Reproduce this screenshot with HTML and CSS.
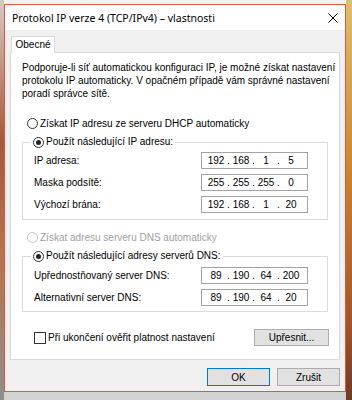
FILE: index.html
```html
<!DOCTYPE html>
<html><head><meta charset="UTF-8" /><link rel="stylesheet" href="styles.css"></head>
<body>
<div class="window">
	<div class="titlebar">
		<span>Protokol IP verze 4 (TCP/IPv4) – vlastnosti</span>
		<svg class="close" width="10" height="10" viewBox="0 0 10 10"><path d="M0.5 0.5L9.5 9.5M9.5 0.5L0.5 9.5" stroke="#000" stroke-width="1" fill="none"/></svg>
	</div>
	<div class="client">
		<div class="tabs"><div class="tab">Obecné</div></div>
		<div class="panel">
			<p class="intro">Podporuje-li síť automatickou konfiguraci IP, je možné získat nastavení<br>
			protokolu IP automaticky. V opačném případě vám správné nastavení<br>
			poradí správce sítě.</p>
			<div class="radio first"><span class="circle"></span>Získat IP adresu ze serveru DHCP automaticky</div>
			<fieldset class="group">
				<legend><span class="radio"><span class="circle on"></span>Použít následující IP adresu:</span></legend>
				<div class="row"><span>IP adresa:</span><span class="ip"><i>192</i><b>.</b><i>168</i><b>.</b><i>1</i><b>.</b><i>5</i></span></div>
				<div class="row"><span>Maska podsítě:</span><span class="ip"><i>255</i><b>.</b><i>255</i><b>.</b><i>255</i><b>.</b><i>0</i></span></div>
				<div class="row"><span>Výchozí brána:</span><span class="ip"><i>192</i><b>.</b><i>168</i><b>.</b><i>1</i><b>.</b><i>20</i></span></div>
			</fieldset>
			<div class="radio dns disabled"><span class="circle"></span>Získat adresu serveru DNS automaticky</div>
			<fieldset class="group second">
				<legend><span class="radio"><span class="circle on"></span>Použít následující adresy serverů DNS:</span></legend>
				<div class="row"><span>Upřednostňovaný server DNS:</span><span class="ip"><i>89</i><b>.</b><i>190</i><b>.</b><i>64</i><b>.</b><i>200</i></span></div>
				<div class="row"><span>Alternativní server DNS:</span><span class="ip"><i>89</i><b>.</b><i>190</i><b>.</b><i>64</i><b>.</b><i>20</i></span></div>
			</fieldset>
			<div class="validate">
				<span class="check"><span class="box"></span>Při ukončení ověřit platnost nastavení</span>
				<button class="btn advanced">Upřesnit...</button>
			</div>
		</div>
		<div class="actions">
			<button class="btn default">OK</button>
			<button class="btn">Zrušit</button>
		</div>
	</div>
</div>
</body></html>
```
FILE: styles.css
```css
* { box-sizing: border-box; }
body { margin: 0; width: 352px; height: 400px; overflow: hidden;
	padding: 4px 6px 8px 4px;
	background:
		linear-gradient(#d4cbc6, #a8583a 35%, #b7744e 65%, #8e8e8e) left top / 4px 100% no-repeat,
		linear-gradient(#dcc070, #c98030 45%, #a5552a 80%, #6e3a26) right top / 6px 100% no-repeat,
		linear-gradient(#f2f2f2, #f2f2f2 4px, #e3e3e3 4px, #e3e3e3 392px, #d2d2d2 392px);
	font: 10px "Liberation Sans", sans-serif; color: #000;
}
.window { height: 388px; border: 1px solid #e2573b; display: flex; flex-direction: column; background: #f0f0f0 }
.titlebar { height: 25px; flex: none; background: #fff; display: flex; align-items: center;
	justify-content: space-between; padding: 0 7px; font: 10.5px "Noto Sans", sans-serif }
.client { flex: 1; padding: 6px 5px 0 5px }
.tabs { display: flex; height: 16px; padding-left: 1px; position: relative; z-index: 1 }
.tab { width: 44px; height: 17px; background: #fff; border: 1px solid #d9d9d9; border-bottom: none;
	text-align: center; line-height: 15px }
.panel { height: 308px; border: 1px solid #d9d9d9; background: #fff }
.intro { margin: 8px 0 0 11px; line-height: 13px }
.radio { display: flex; align-items: center; height: 16px; white-space: nowrap }
.radio.first { margin: 15px 0 0 16px }
.radio.dns { margin: 9px 0 0 16px }
.disabled { color: #a0a0a0 }
.circle { width: 11px; height: 11px; border: 1px solid #333; border-radius: 50%; background: #fff;
	margin-right: 2px; display: flex; align-items: center; justify-content: center }
.disabled .circle { border-color: #c4c4c4 }
.circle.on::after { content: ""; width: 5px; height: 5px; border-radius: 50%; background: #222 }
.group { margin: 3px 0 0 11px; width: 306px; border: 1px solid #dcdcdc; padding: 2px 19px 6px 11px; min-width: 0 }
.group.second { padding-top: 3px; padding-bottom: 5px }
.group legend { padding: 0 2px; margin-left: -3px; line-height: 16px }
.row { display: flex; justify-content: space-between; align-items: center; height: 17px }
.row + .row { margin-top: 5px }
.ip { width: 107px; height: 17px; border: 1px solid #a3a3a3; display: flex; align-items: center; padding-left: 3px }
.ip i { font-style: normal; width: 22px; text-align: center }
.ip b { font-weight: normal; width: 3px; text-align: center }
.validate { display: flex; justify-content: space-between; align-items: center; height: 17px; margin: 17px 10px 0 23px }
.check { display: flex; align-items: center }
.box { width: 12px; height: 12px; border: 1px solid #333; margin-right: 2px }
.btn { font: 10px "Liberation Sans", sans-serif; color: #000; background: #e1e1e1; border: 1px solid #adadad; padding: 0 }
.advanced { width: 75px; height: 17px }
.actions { display: flex; justify-content: flex-end; gap: 7px; margin-top: 8px }
.actions .btn { width: 63px; height: 18px }
.btn.default { border-color: #0078d7 }
```
